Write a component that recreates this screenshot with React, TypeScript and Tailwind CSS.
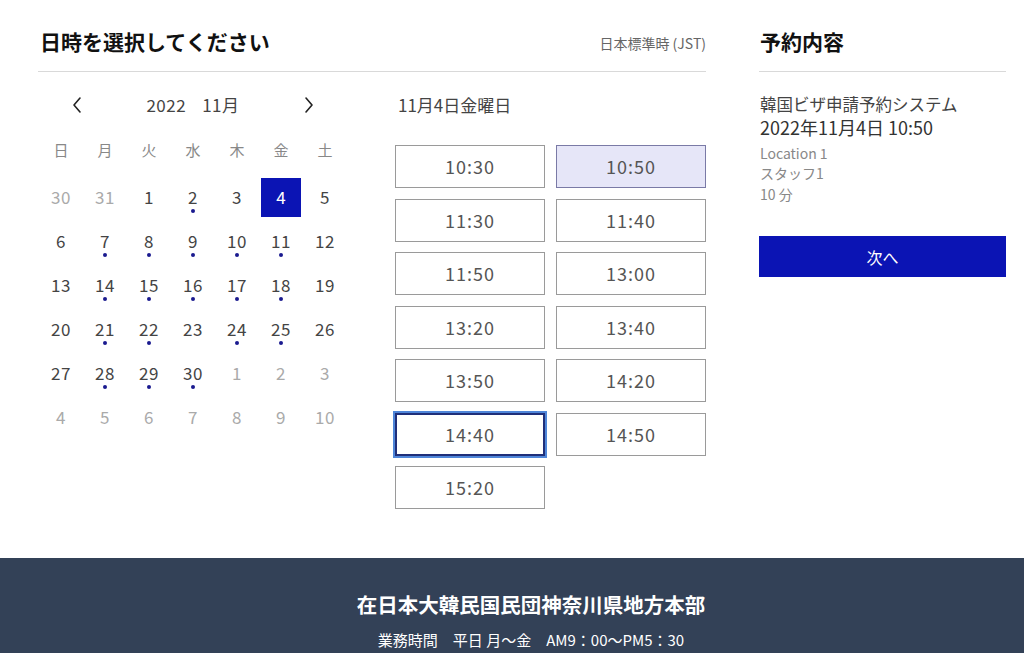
import React from "react";

const FONT = { fontFamily: "'Noto Sans CJK JP', 'Noto Sans', sans-serif" };

type Day = { d: number; muted?: boolean; dot?: boolean; sel?: boolean };

const rows: Day[][] = [
  [{ d: 30, muted: true }, { d: 31, muted: true }, { d: 1 }, { d: 2, dot: true }, { d: 3 }, { d: 4, sel: true }, { d: 5 }],
  [{ d: 6 }, { d: 7, dot: true }, { d: 8, dot: true }, { d: 9, dot: true }, { d: 10, dot: true }, { d: 11, dot: true }, { d: 12 }],
  [{ d: 13 }, { d: 14, dot: true }, { d: 15, dot: true }, { d: 16, dot: true }, { d: 17, dot: true }, { d: 18, dot: true }, { d: 19 }],
  [{ d: 20 }, { d: 21, dot: true }, { d: 22, dot: true }, { d: 23 }, { d: 24, dot: true }, { d: 25, dot: true }, { d: 26 }],
  [{ d: 27 }, { d: 28, dot: true }, { d: 29, dot: true }, { d: 30, dot: true }, { d: 1, muted: true }, { d: 2, muted: true }, { d: 3, muted: true }],
  [{ d: 4, muted: true }, { d: 5, muted: true }, { d: 6, muted: true }, { d: 7, muted: true }, { d: 8, muted: true }, { d: 9, muted: true }, { d: 10, muted: true }],
];

const weekdays = ["日", "月", "火", "水", "木", "金", "土"];
const slots = ["10:30", "10:50", "11:30", "11:40", "11:50", "13:00", "13:20", "13:40", "13:50", "14:20", "14:40", "14:50", "15:20"];

function Chevron({ dir }: { dir: "l" | "r" }) {
  return (
    <svg width="12" height="18" viewBox="0 0 12 18" fill="none" stroke="#222" strokeWidth="1.6" strokeLinecap="round" strokeLinejoin="round">
      {dir === "l" ? <path d="M9 2 L3 9 L9 16" /> : <path d="M3 2 L9 9 L3 16" />}
    </svg>
  );
}

export default function App() {
  return (
    <div className="w-[1024px] min-h-[653px] bg-white flex flex-col" style={FONT}>
      <div className="flex pl-[38px] pt-[28px] h-[558px]">
        {/* left */}
        <div className="w-[668px] flex flex-col">
          <div className="flex items-end justify-between border-b border-[#d9d9d9] h-[44px] pb-[15px]">
            <div className="text-[21px] font-bold text-[#111] leading-[30px] pl-[2px]">日時を選択してください</div>
            <div className="text-[14px] text-[#666] leading-[20px] pb-[3px]">日本標準時 (JST)</div>
          </div>
          <div className="flex pt-[13px]">
            {/* calendar */}
            <div className="w-[357px] pl-[1px]">
              <div className="w-[308px] h-[40px] flex items-center justify-between px-[32px]">
                <Chevron dir="l" />
                <div className="text-[17px] text-[#444] tracking-[0.5px] flex gap-[16px]">
                  <span>2022</span>
                  <span>11月</span>
                </div>
                <Chevron dir="r" />
              </div>
              <div className="grid grid-cols-7 w-[308px] h-[50px] items-center">
                {weekdays.map((w) => (
                  <div key={w} className="text-center text-[15px] text-[#888] leading-[20px] pb-[1px]">{w}</div>
                ))}
              </div>
              <div className="grid grid-cols-7 w-[308px]">
                {rows.flat().map((c, i) => (
                  <div key={i} className="h-[44px] flex items-center justify-center relative">
                    {c.sel ? (
                      <div className="w-[40px] h-[39px] bg-[#0b14b4] flex items-center justify-center text-white text-[17px]">{c.d}</div>
                    ) : (
                      <span className={"text-[17px] leading-[20px] tracking-[0.5px] " + (c.muted ? "text-[#aaa]" : "text-[#444]")}>{c.d}</span>
                    )}
                    {c.dot && <span className="absolute left-1/2 -translate-x-1/2 top-[34px] w-[4px] h-[4px] rounded-full bg-[#1a1a8f]" />}
                  </div>
                ))}
              </div>
            </div>
            {/* times */}
            <div className="flex-1">
              <div className="h-[40px] flex items-center pl-[3px] text-[17px] text-[#444]">11月4日金曜日</div>
              <div className="grid grid-cols-2 gap-x-[11px] gap-y-[10.5px] mt-[20px] w-[311px]">
                {slots.map((s) => {
                  const sel = s === "10:50";
                  const focus = s === "14:40";
                  return (
                    <div
                      key={s}
                      className={
                        "h-[43px] flex items-center justify-center text-[18px] tracking-[1px] text-[#555] " +
                        (sel
                          ? "bg-[#e6e6f8] border border-[#7a7aa6]"
                          : focus
                          ? "bg-white border-2 border-[#1f2f7a] outline outline-2 outline-[#4f86d9]"
                          : "bg-white border border-[#9a9a9a]")
                      }
                    >
                      {s}
                    </div>
                  );
                })}
              </div>
            </div>
          </div>
        </div>
        {/* right */}
        <div className="w-[247px] ml-[53px] flex flex-col">
          <div className="border-b border-[#d9d9d9] h-[44px] pb-[15px] flex items-end">
            <div className="text-[21px] font-bold text-[#111] leading-[30px] pl-[1px]">予約内容</div>
          </div>
          <div className="pt-[21px] pl-[1px]">
            <div className="text-[16.5px] text-[#444] leading-[22px]">韓国ビザ申請予約システム</div>
            <div className="text-[18px] text-[#333] leading-[24px]">2022年11月4日 10:50</div>
            <div className="text-[14px] text-[#888] leading-[19px] mt-[5px]">Location 1</div>
            <div className="text-[14px] text-[#888] leading-[20px]">スタッフ1</div>
            <div className="text-[14px] text-[#888] leading-[20px] mt-[1px]">10 分</div>
          </div>
          <div className="mt-[32px] h-[41px] bg-[#0b14b4] text-white text-[16px] flex items-center justify-center">次へ</div>
        </div>
      </div>
      <footer className="bg-[#334157] flex-1 min-h-[95px] flex flex-col items-center pt-[32px] pl-[38px]">
        <div className="text-white text-[20.5px] font-bold leading-[28px]">在日本大韓民国民団神奈川県地方本部</div>
        <div className="text-white text-[15px] leading-[20px] mt-[12px] whitespace-pre">業務時間　平日 月～金　AM9：00～PM5：30</div>
      </footer>
    </div>
  );
}
